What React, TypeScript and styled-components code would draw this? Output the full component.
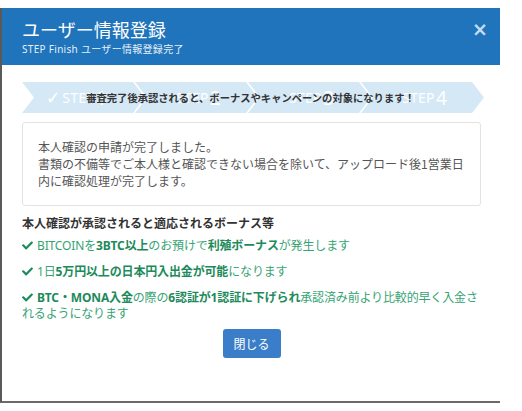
import React from "react";
import styled, { createGlobalStyle } from "styled-components";
import { FaCheck } from "react-icons/fa";

const GlobalStyle = createGlobalStyle`
	html, body {
		margin: 0;
		padding: 0;
		background: #fff;
	}
	body {
		font-family: "Noto Sans", "Noto Sans CJK JP", sans-serif;
	}
`;

const steps = ["STEP1", "STEP2", "STEP3", "STEP4"];

function App() {
	return (
		<Page>
			<GlobalStyle />
			<Modal>
				<Header>
					<TitleBlock>
						<Title>ユーザー情報登録</Title>
						<SubTitle>STEP Finish ユーザー情報登録完了</SubTitle>
					</TitleBlock>
					<Close>×</Close>
				</Header>
				<Body>
					<StepBar>
						{steps.map((label, i) => (
							<Step key={label} first={i === 0}>
								{i === 0 && <StepCheck>✓</StepCheck>}
								{label.slice(0, 4)}
								<StepNum>{label.slice(4)}</StepNum>
							</Step>
						))}
						<StepNotice>審査完了後承認されると、ボーナスやキャンペーンの対象になります！</StepNotice>
					</StepBar>
					<Card>
						<p>本人確認の申請が完了しました。</p>
						<p>書類の不備等でご本人様と確認できない場合を除いて、アップロード後1営業日内に確認処理が完了します。</p>
					</Card>
					<Heading>本人確認が承認されると適応されるボーナス等</Heading>
					<BonusList>
						<Bonus>
							<Check />
							BITCOINを<b>3BTC以上</b>のお預けで<b>利殖ボーナス</b>が発生します
						</Bonus>
						<Bonus>
							<Check />
							1日<b>5万円以上の日本円入出金が可能</b>になります
						</Bonus>
						<Bonus>
							<Check />
							<b>BTC・MONA入金</b>の際の<b>6認証が1認証に下げられ</b>承認済み前より比較的早く入金されるようになります
						</Bonus>
					</BonusList>
					<Footer>
						<CloseButton>閉じる</CloseButton>
					</Footer>
				</Body>
			</Modal>
		</Page>
	);
}

export default App;

const Page = styled.div`
	width: 522px;
	height: 411px;
	padding-top: 8px;
	box-sizing: border-box;
	overflow: hidden;
`;

const Modal = styled.div`
	width: 500px;
	height: 395px;
	box-sizing: border-box;
	border-left: 2px solid #5a5a5a;
	border-bottom: 2px solid #6a6a6a;
	background: #fff;
	display: flex;
	flex-direction: column;
`;

const Header = styled.div`
	height: 57px;
	background: #2074bb;
	padding: 0 12px 0 20px;
	display: flex;
	justify-content: space-between;
	align-items: flex-start;
	box-sizing: border-box;
`;

const TitleBlock = styled.div`
	display: flex;
	flex-direction: column;
	padding-top: 8px;
`;

const Title = styled.h1`
	margin: 0;
	font-size: 18px;
	line-height: 26px;
	font-weight: 400;
	color: #fff;
	font-family: "Noto Sans CJK JP", sans-serif;
`;

const SubTitle = styled.div`
	font-size: 10px;
	line-height: 14px;
	color: #e6f0fa;
	letter-spacing: 0.3px;
`;

const Close = styled.span`
	margin-top: 11px;
	font-size: 19px;
	line-height: 20px;
	font-weight: 700;
	color: rgba(255, 255, 255, 0.75);
	font-family: "DejaVu Sans", sans-serif;
`;

const Body = styled.div`
	padding: 17px 19px 0 20px;
	display: flex;
	flex-direction: column;
`;

const StepBar = styled.div`
	position: relative;
	display: flex;
	height: 31px;
	width: 460px;
`;

const Step = styled.div<{ first?: boolean }>`
	flex: 0 0 123px;
	margin-left: ${(p) => (p.first ? "0" : "-10px")};
	background: #d5e8f6;
	clip-path: polygon(0 0, 111px 0, 123px 50%, 111px 100%, 0 100%, 12px 50%);
	display: flex;
	align-items: center;
	justify-content: center;
	color: #fff;
	font-size: 14px;
	letter-spacing: 0.3px;
	padding-left: 4px;
	box-sizing: border-box;
`;

const StepCheck = styled.span`
	font-size: 18px;
	margin-left: -18px;
	margin-right: 1px;
	font-family: "DejaVu Sans", sans-serif;
`;

const StepNum = styled.span`
	font-size: 19px;
	margin-left: 1px;
`;

const StepNotice = styled.div`
	position: absolute;
	left: 0;
	right: 0;
	top: 0;
	bottom: 0;
	display: flex;
	align-items: center;
	justify-content: center;
	font-family: "Noto Sans CJK JP", sans-serif;
	font-size: 10.3px;
	font-weight: 700;
	color: #333;
	padding-right: 3px;
`;

const Card = styled.div`
	margin-top: 9px;
	border: 1px solid #e3e3e3;
	border-radius: 3px;
	padding: 15px 8px 16px 15px;
	font-family: "Noto Sans CJK JP", sans-serif;
	font-size: 12px;
	line-height: 17px;
	color: #555;
	p {
		margin: 0;
	}
`;

const Heading = styled.h3`
	margin: 8px 0 0;
	font-family: "Noto Sans CJK JP", sans-serif;
	font-size: 12px;
	line-height: 17px;
	font-weight: 700;
	color: #333;
`;

const BonusList = styled.ul`
	list-style: none;
	margin: 7px 0 0;
	padding: 0;
	display: flex;
	flex-direction: column;
	gap: 10px;
`;

const Bonus = styled.li`
	font-family: "Noto Sans", "Noto Sans CJK JP", sans-serif;
	font-size: 12px;
	line-height: 16px;
	letter-spacing: -0.15px;
	color: #36a374;
	b {
		color: #1d8a5b;
		font-weight: 700;
	}
`;

const Check = styled(FaCheck)`
	font-size: 11px;
	color: #1d8a5b;
	margin-right: 4px;
	vertical-align: -1px;
`;

const Footer = styled.div`
	display: flex;
	justify-content: center;
	margin-top: 7px;
`;

const CloseButton = styled.button`
	width: 58px;
	height: 29px;
	border: none;
	border-radius: 3px;
	background: #3a7dc8;
	color: #fff;
	font-family: "Noto Sans CJK JP", sans-serif;
	font-size: 12px;
`;
